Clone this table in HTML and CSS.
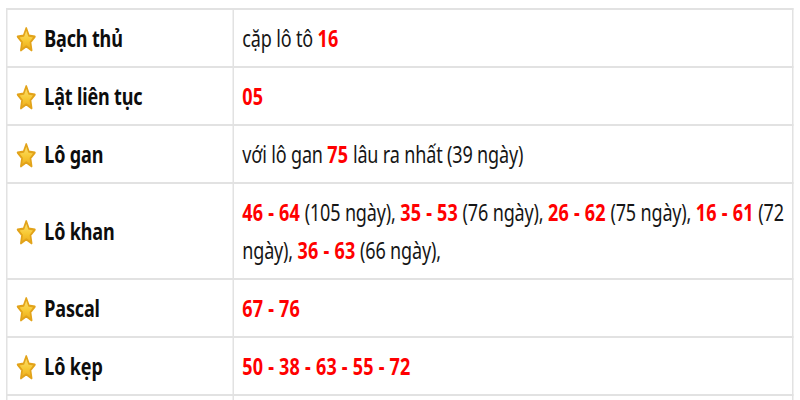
FILE: index.html
```html
<!DOCTYPE html>
<html lang="vi">
<head>
<meta charset="utf-8">
<link rel="stylesheet" href="styles.css">
</head>
<body>
<div class="page">
  <svg class="defs" width="0" height="0" aria-hidden="true"><defs><linearGradient id="g" x1="0" y1="0" x2="0" y2="1"><stop offset="0" stop-color="#fde57a"/><stop offset="0.55" stop-color="#f7c935"/><stop offset="1" stop-color="#eba91a"/></linearGradient></defs></svg>
  <table class="stats">
    <tr>
      <th><span class="label"><svg class="star" viewBox="0 0 24 24"><path d="M12 2.6l2.8 5.9 6.4.8-4.7 4.5 1.2 6.4L12 17.1l-5.7 3.1 1.2-6.4-4.7-4.5 6.4-.8z" fill="url(#g)" stroke="#e2a31a" stroke-width="1.8" stroke-linejoin="round"/></svg>Bạch thủ</span></th>
      <td>cặp lô tô <b class="num">16</b></td>
    </tr>
    <tr>
      <th><span class="label"><svg class="star" viewBox="0 0 24 24"><path d="M12 2.6l2.8 5.9 6.4.8-4.7 4.5 1.2 6.4L12 17.1l-5.7 3.1 1.2-6.4-4.7-4.5 6.4-.8z" fill="url(#g)" stroke="#e2a31a" stroke-width="1.8" stroke-linejoin="round"/></svg>Lật liên tục</span></th>
      <td><b class="num">05</b></td>
    </tr>
    <tr>
      <th><span class="label"><svg class="star" viewBox="0 0 24 24"><path d="M12 2.6l2.8 5.9 6.4.8-4.7 4.5 1.2 6.4L12 17.1l-5.7 3.1 1.2-6.4-4.7-4.5 6.4-.8z" fill="url(#g)" stroke="#e2a31a" stroke-width="1.8" stroke-linejoin="round"/></svg>Lô gan</span></th>
      <td>với lô gan <b class="num">75</b> lâu ra nhất (39 ngày)</td>
    </tr>
    <tr>
      <th><span class="label"><svg class="star" viewBox="0 0 24 24"><path d="M12 2.6l2.8 5.9 6.4.8-4.7 4.5 1.2 6.4L12 17.1l-5.7 3.1 1.2-6.4-4.7-4.5 6.4-.8z" fill="url(#g)" stroke="#e2a31a" stroke-width="1.8" stroke-linejoin="round"/></svg>Lô khan</span></th>
      <td><span class="line"><b class="num">46 - 64</b> (105 ngày), <b class="num">35 - 53</b> (76 ngày), <b class="num">26 - 62</b> (75 ngày), <b class="num">16 - 61</b> (72</span><br><span class="line">ngày), <b class="num">36 - 63</b> (66 ngày),</span></td>
    </tr>
    <tr>
      <th><span class="label"><svg class="star" viewBox="0 0 24 24"><path d="M12 2.6l2.8 5.9 6.4.8-4.7 4.5 1.2 6.4L12 17.1l-5.7 3.1 1.2-6.4-4.7-4.5 6.4-.8z" fill="url(#g)" stroke="#e2a31a" stroke-width="1.8" stroke-linejoin="round"/></svg>Pascal</span></th>
      <td><b class="num">67 - 76</b></td>
    </tr>
    <tr>
      <th><span class="label"><svg class="star" viewBox="0 0 24 24"><path d="M12 2.6l2.8 5.9 6.4.8-4.7 4.5 1.2 6.4L12 17.1l-5.7 3.1 1.2-6.4-4.7-4.5 6.4-.8z" fill="url(#g)" stroke="#e2a31a" stroke-width="1.8" stroke-linejoin="round"/></svg>Lô kẹp</span></th>
      <td><b class="num">50 - 38 - 63 - 55 - 72</b></td>
    </tr>
    <tr>
      <th>&nbsp;</th>
      <td>&nbsp;</td>
    </tr>
  </table>
</div>
</body>
</html>
```

FILE: styles.css
```css
html, body {
  margin: 0;
  padding: 0;
  background: #fff;
  overflow: hidden;
}
body {
  padding: 8px 0 0 6px;
}
.page {
  width: 1050px;
  transform: scaleX(0.75);
  transform-origin: 0 0;
  font-family: "Noto Sans", "Open Sans", sans-serif;
  font-size: 24px;
  line-height: 38px;
  color: #161616;
}
.defs {
  position: absolute;
  width: 0;
  height: 0;
}
.stats {
  width: 100%;
  table-layout: fixed;
  border-collapse: collapse;
  border: 2px solid #e2e2e2;
}
.stats th,
.stats td {
  border: 2px solid #e2e2e2;
  padding: 9px 11px;
  text-align: left;
  vertical-align: middle;
}
.stats td {
  letter-spacing: -0.2px;
}
.stats th {
  width: 278px;
  font-weight: 700;
  color: #0d0d0d;
  letter-spacing: -0.2px;
}
.label {
  display: flex;
  align-items: center;
  gap: 9px;
}
.star {
  width: 30px;
  height: 30px;
  flex: none;
  margin-top: 3px;
  margin-left: -1px;
}
.num {
  color: #ff0000;
  font-weight: 700;
  letter-spacing: 0.3px;
}
.line {
  white-space: nowrap;
}
```
